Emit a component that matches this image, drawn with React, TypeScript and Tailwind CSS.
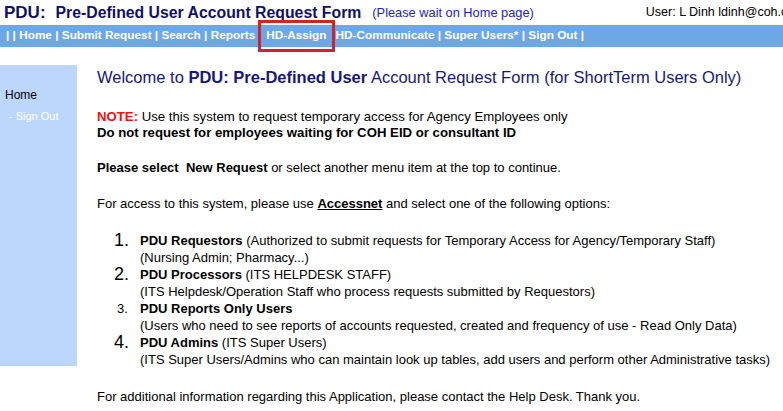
export default function App() {
	const options = [
		{
			num: "1.",
			big: true,
			title: "PDU Requestors",
			note: " (Authorized to submit requests for Temporary Access for Agency/Temporary Staff)",
			sub: "(Nursing Admin; Pharmacy...)",
		},
		{
			num: "2.",
			big: true,
			title: "PDU Processors",
			note: " (ITS HELPDESK STAFF)",
			sub: "(ITS Helpdesk/Operation Staff who process requests submitted by Requestors)",
		},
		{
			num: "3.",
			big: false,
			title: "PDU Reports Only Users",
			note: "",
			sub: "(Users who need to see reports of accounts requested, created and frequency of use - Read Only Data)",
		},
		{
			num: "4.",
			big: true,
			title: "PDU Admins",
			note: " (ITS Super Users)",
			sub: "(ITS Super Users/Admins who can maintain look up tables, add users and perform other Administrative tasks)",
		},
	];

	return (
		<div className="h-[411px] w-[783px] overflow-hidden bg-white font-['Liberation_Sans',Arial,sans-serif] text-black">
			{/* title row */}
			<div className="flex h-[25px] items-center overflow-hidden whitespace-nowrap pl-[4px]">
				<span className="text-[17px] font-bold text-[#10106b]">PDU:</span>
				<span className="ml-[10px] text-[15.8px] font-bold text-[#10106b]">Pre-Defined User Account Request Form</span>
				<span className="ml-[11px] text-[12.8px] text-[#2323c8]">(Please wait on Home page)</span>
				<span className="ml-[112px] text-[12.5px]">User: L Dinh ldinh@coh.org</span>
			</div>

			{/* nav */}
			<div className="flex h-[22px] items-center whitespace-nowrap bg-[#6ea7e6] pl-[6px] text-[11.8px] font-bold text-white">
				<span>| | Home | Submit Request | Search | Reports</span>
				<span className="ml-[10px] px-[1px] outline outline-[3px] outline-offset-[4px] outline-[#d2232a]">HD-Assign</span>
				<span className="ml-[8px]">HD-Communicate | Super Users* | Sign Out |</span>
			</div>

			<div className="flex">
				{/* sidebar */}
				<div className="mt-[18px] h-[301px] w-[77px] shrink-0 bg-[#bcd6fe] pt-[21px]">
					<div className="pl-[5px] text-[12px]">Home</div>
					<div className="mt-[4px] pl-[9px] text-[11px] text-white">- Sign Out</div>
				</div>

				{/* content */}
				<div className="pl-[20px] pt-[20px] text-[13px] leading-[16px]">
					<div className="text-[16.5px] leading-[20px] text-[#18187a]">
						Welcome to <b>PDU: Pre-Defined User</b> Account Request Form (for ShortTerm Users Only)
					</div>

					<div className="mt-[22px] text-[13.2px]">
						<span className="font-bold text-[#ee1111]">NOTE:</span> Use this system to request temporary access for Agency Employees only
					</div>
					<div className="text-[13.2px] font-bold">Do not request for employees waiting for COH EID or consultant ID</div>

					<div className="mt-[19px]">
						<b>Please select&nbsp; New Request</b> or select another menu item at the top to continue.
					</div>

					<div className="mt-[20px]">
						For access to this system, please use <b className="underline">Accessnet</b> and select one of the following options:
					</div>

					<div className="mt-[20px] flex flex-col">
						{options.map((o) => (
							<div key={o.num} className="flex">
								<div
									className={
										o.big
											? "w-[43px] shrink-0 pl-[17px] text-[18px] leading-[16px]"
											: "w-[43px] shrink-0 pl-[20px] text-[13px] leading-[17px]"
									}
								>
									{o.num}
								</div>
								<div className="whitespace-nowrap">
									<div className="leading-[17px]">
										<b>{o.title}</b>
										{o.note}
									</div>
									<div className="leading-[17px]">{o.sub}</div>
								</div>
							</div>
						))}
					</div>

					<div className="mt-[21px]">
						For additional information regarding this Application, please contact the Help Desk. Thank you.
					</div>
				</div>
			</div>
		</div>
	);
}
